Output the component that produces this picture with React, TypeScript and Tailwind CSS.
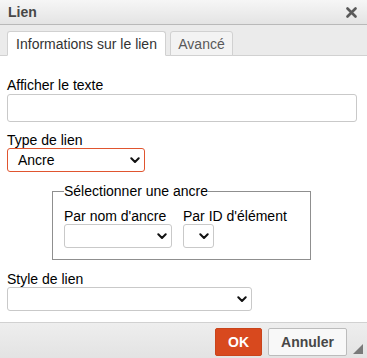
import React from "react";

function Chevron() {
  return (
    <svg width="10" height="7" viewBox="0 0 10 7">
      <path d="M1.3 1.3 L5 5 L8.7 1.3" fill="none" stroke="#111" strokeWidth="2" strokeLinecap="round" strokeLinejoin="round" />
    </svg>
  );
}

function FakeSelect({ w, value, focus }: { w: string; value?: string; focus?: boolean }) {
  return (
    <div
      className={`${w} h-[24px] flex items-center justify-between bg-white rounded-[3px] border ${
        focus ? "border-[#e0552f]" : "border-[#c9c9c9]"
      } pl-[10px] pr-[4px]`}
    >
      <span className="text-[14px] text-black leading-[16px]">{value ?? ""}</span>
      <Chevron />
    </div>
  );
}

export default function App() {
  return (
    <div
      className="w-[367px] h-[358px] flex flex-col overflow-hidden bg-white relative"
      style={{ fontFamily: '"Liberation Sans", Arial, sans-serif' }}
    >
      {/* Title bar */}
      <div className="h-[25px] shrink-0 flex items-center justify-between border-b border-[#b9b9b9] bg-gradient-to-b from-[#f6f6f6] to-[#e4e4e4] pl-[8px] pr-[10px]">
        <span className="text-[14px] font-bold text-[#474747] leading-[16px]">Lien</span>
        <svg width="11" height="11" viewBox="0 0 11 11" className="mt-[1px]">
          <path d="M1.5 1.5 L9.5 9.5 M9.5 1.5 L1.5 9.5" stroke="#5a5a5a" strokeWidth="2.6" strokeLinecap="round" />
        </svg>
      </div>

      {/* Tabs */}
      <div className="h-[31px] shrink-0 flex items-end gap-[4px] pl-[7px] bg-[#ebebeb] border-b border-[#d1d1d1]">
        <div className="w-[159px] h-[25px] -mb-px flex items-center justify-center bg-white border border-[#d1d1d1] border-b-white rounded-t-[3px] text-[14px] leading-[16px] text-[#333]">
          Informations sur le lien
        </div>
        <div className="w-[63px] h-[25px] -mb-px flex items-center justify-center bg-[#f3f3f3] border border-[#d1d1d1] rounded-t-[3px] text-[14px] leading-[16px] text-[#595959]">
          Avancé
        </div>
      </div>

      {/* Body */}
      <div className="flex-1 flex flex-col items-start pt-[22px] pl-[7px] text-[14px] text-black">
        <label className="block leading-[15px]">Afficher le texte</label>
        <div className="mt-[1px] w-[350px] h-[28px] bg-white border border-[#c9c9c9] rounded-[3px]" />

        <label className="block mt-[11px] leading-[15px]">Type de lien</label>
        <FakeSelect w="w-[138px]" value="Ancre" focus />

        <fieldset className="mt-[12px] ml-[45px] w-[259px] border border-[#8f8f8f] pl-[11px] pt-[10px] pb-[11px]">
          <legend className="leading-[15px] p-0">Sélectionner une ancre</legend>
          <div className="flex gap-[11px]">
            <div className="flex flex-col">
              <span className="leading-[15px]">Par nom d'ancre</span>
              <FakeSelect w="w-[108px]" />
            </div>
            <div className="flex flex-col">
              <span className="leading-[15px]">Par ID d'élément</span>
              <FakeSelect w="w-[31px]" />
            </div>
          </div>
        </fieldset>

        <label className="block mt-[12px] leading-[15px]">Style de lien</label>
        <FakeSelect w="w-[245px]" />
      </div>

      {/* Footer */}
      <div className="h-[36px] shrink-0 border-t border-[#d1d1d1] bg-gradient-to-b from-[#eeeeee] to-[#e3e3e3] flex items-start justify-end pt-[5px] pr-[20px] gap-[6px]">
        <button className="w-[47px] h-[28px] rounded-[2px] bg-[#d8491e] border border-[#c9441b] text-white font-bold text-[14px] leading-[16px]">
          OK
        </button>
        <button className="w-[79px] h-[28px] rounded-[2px] bg-[#f8f8f8] border border-[#bcbcbc] text-[#474747] font-bold text-[14px] leading-[16px]">
          Annuler
        </button>
      </div>

      {/* Resize grip */}
      <svg width="10" height="10" viewBox="0 0 10 10" className="absolute right-[4px] bottom-[4px]">
        <path d="M10 0 L10 10 L0 10 Z" fill="#7a7a7a" />
      </svg>
    </div>
  );
}
